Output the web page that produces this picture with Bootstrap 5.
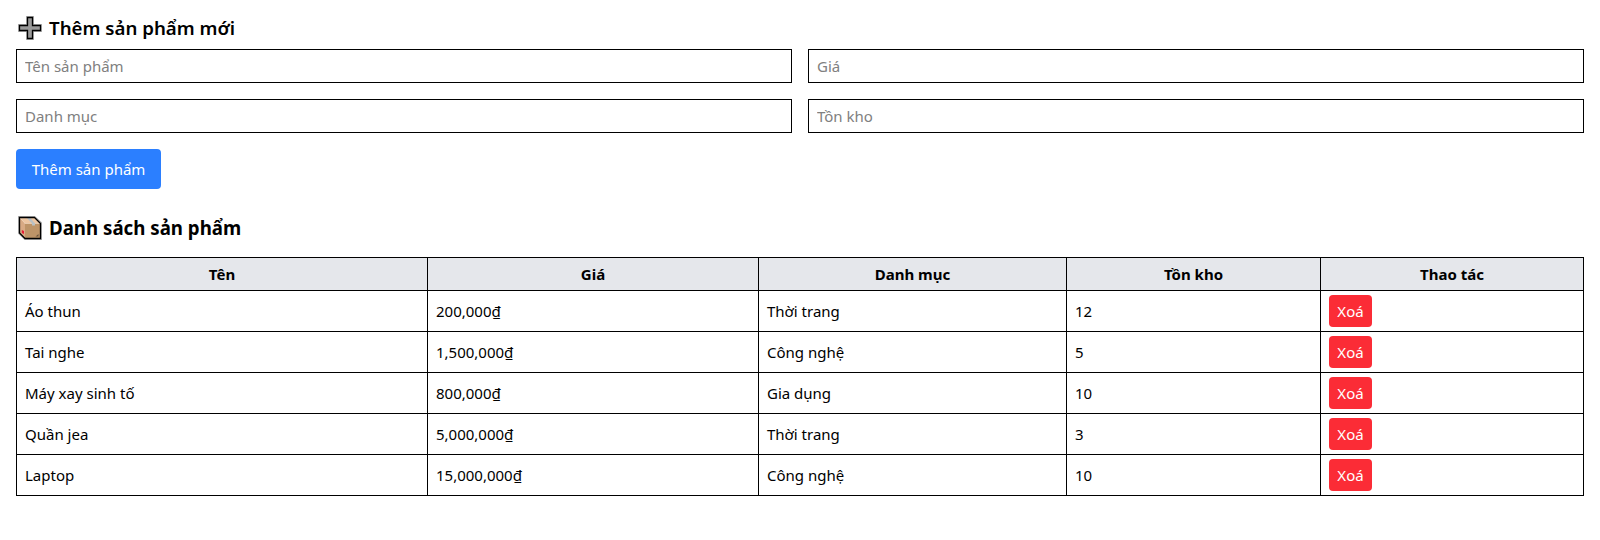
<!DOCTYPE html>
<html lang="vi">
<head>
<meta charset="utf-8">
<meta name="viewport" content="width=device-width, initial-scale=1">
<title>Quản lý sản phẩm</title>
<link href="https://cdn.jsdelivr.net/npm/bootstrap@5.3.0/dist/css/bootstrap.min.css" rel="stylesheet">
<style>
  body { font-family: "Noto Sans", "Open Sans", sans-serif; font-size: 15px; line-height: 24px; color: #000; background: #fff; }
  .title-line { font-size: 18.7px; line-height: 28px; color: #000; }
  .title-line svg { width: 24px; height: 24px; flex: none; margin: 0 7px 0 2px; }
  .title-form { font-weight: 600; height: 33px; padding-bottom: 9px; }
  .title-list { font-weight: 700; margin: 25px 0 15px; }
  .product-input { height: 34px; border: 1px solid #000; font-size: 15px; line-height: 24px; padding: 4px 8px; color: #000; }
  .product-input::placeholder { color: #808080; opacity: 1; }
  .btn-add { --bs-btn-bg: #2b7fff; --bs-btn-color: #fff; --bs-btn-hover-bg: #155dfc; --bs-btn-hover-color: #fff; width: 145px; height: 40px; font-size: 15px; line-height: 24px; border-radius: 4px; }
  .btn-del { --bs-btn-bg: #fb2c36; --bs-btn-color: #fff; --bs-btn-hover-bg: #e7000b; --bs-btn-hover-color: #fff; width: 43px; height: 32px; font-size: 15px; line-height: 24px; border-radius: 4px; }
  .product-table { --bs-table-color: #000; table-layout: fixed; border-color: #000; color: #000; }
  .product-table > :not(caption) > * > * { padding: 4px 8px; border: 1px solid #000; }
  .product-table thead th { background: #e5e7eb; text-align: center; height: 33px; }
  .product-table tbody td { height: 41px; }
  .c-name { width: 411px; } .c-price { width: 331px; } .c-cat { width: 308px; } .c-stock { width: 254px; }
</style>
</head>
<body>
<main class="p-3">
  <h2 class="title-line title-form d-flex align-items-center mb-0">
    <svg viewBox="0 0 24 24" aria-hidden="true"><path d="M9 1h6v8h8v6h-8v8H9v-8H1V9h8z" fill="none" stroke="#b0b0b0" stroke-width="2"/><path d="M9.500 1.500h5v8h8v5h-8v8h-5v-8h-8v-5h8z" fill="#999" stroke="#000" stroke-width="1.300"/></svg>
    <span>Thêm sản phẩm mới</span>
  </h2>
  <form>
    <div class="row g-3">
      <div class="col-6"><input class="form-control rounded-0 product-input" placeholder="Tên sản phẩm"></div>
      <div class="col-6"><input class="form-control rounded-0 product-input" placeholder="Giá"></div>
      <div class="col-6"><input class="form-control rounded-0 product-input" placeholder="Danh mục"></div>
      <div class="col-6"><input class="form-control rounded-0 product-input" placeholder="Tồn kho"></div>
    </div>
    <button type="button" class="btn btn-add border-0 mt-3 px-0">Thêm sản phẩm</button>
  </form>
  <h2 class="title-line title-list d-flex align-items-center">
    <svg viewBox="0 0 24 24" aria-hidden="true"><path d="M1 1h15.500L23 7v16H7l-6-6z" fill="none" stroke="#b0b0b0" stroke-width="2"/><path d="M7 7.500h15.500v15H7z" fill="#bd9468"/><path d="M1.500 1.500L7 7.500v15l-5.500-5z" fill="#d8aa84"/><path d="M1.500 1.500h15l6 6H7z" fill="#edc6a2"/><path d="M8.500 1.500h3.500l5 6v2h-3v-2z" fill="#b9c1c4"/><path d="M3.800 14l2.200 1v3l-2.200-1z" fill="#e81c38"/><path d="M17.500 20.500h3v-2.500z" fill="#6b563f"/><path d="M1.500 1.500h15l6 6v15H7l-5.500-5.500z" fill="none" stroke="#000" stroke-width="1.300"/></svg>
    <span>Danh sách sản phẩm</span>
  </h2>
  <table class="table product-table align-middle mb-0">
    <colgroup><col class="c-name"><col class="c-price"><col class="c-cat"><col class="c-stock"><col></colgroup>
    <thead><tr><th>Tên</th><th>Giá</th><th>Danh mục</th><th>Tồn kho</th><th>Thao tác</th></tr></thead>
    <tbody>
      <tr><td>Áo thun</td><td>200,000₫</td><td>Thời trang</td><td>12</td><td><button class="btn btn-del border-0 p-0 d-block">Xoá</button></td></tr>
      <tr><td>Tai nghe</td><td>1,500,000₫</td><td>Công nghệ</td><td>5</td><td><button class="btn btn-del border-0 p-0 d-block">Xoá</button></td></tr>
      <tr><td>Máy xay sinh tố</td><td>800,000₫</td><td>Gia dụng</td><td>10</td><td><button class="btn btn-del border-0 p-0 d-block">Xoá</button></td></tr>
      <tr><td>Quần jea</td><td>5,000,000₫</td><td>Thời trang</td><td>3</td><td><button class="btn btn-del border-0 p-0 d-block">Xoá</button></td></tr>
      <tr><td>Laptop</td><td>15,000,000₫</td><td>Công nghệ</td><td>10</td><td><button class="btn btn-del border-0 p-0 d-block">Xoá</button></td></tr>
    </tbody>
  </table>
</main>
<script src="https://cdn.jsdelivr.net/npm/bootstrap@5.3.0/dist/js/bootstrap.bundle.min.js"></script>
</body>
</html>
